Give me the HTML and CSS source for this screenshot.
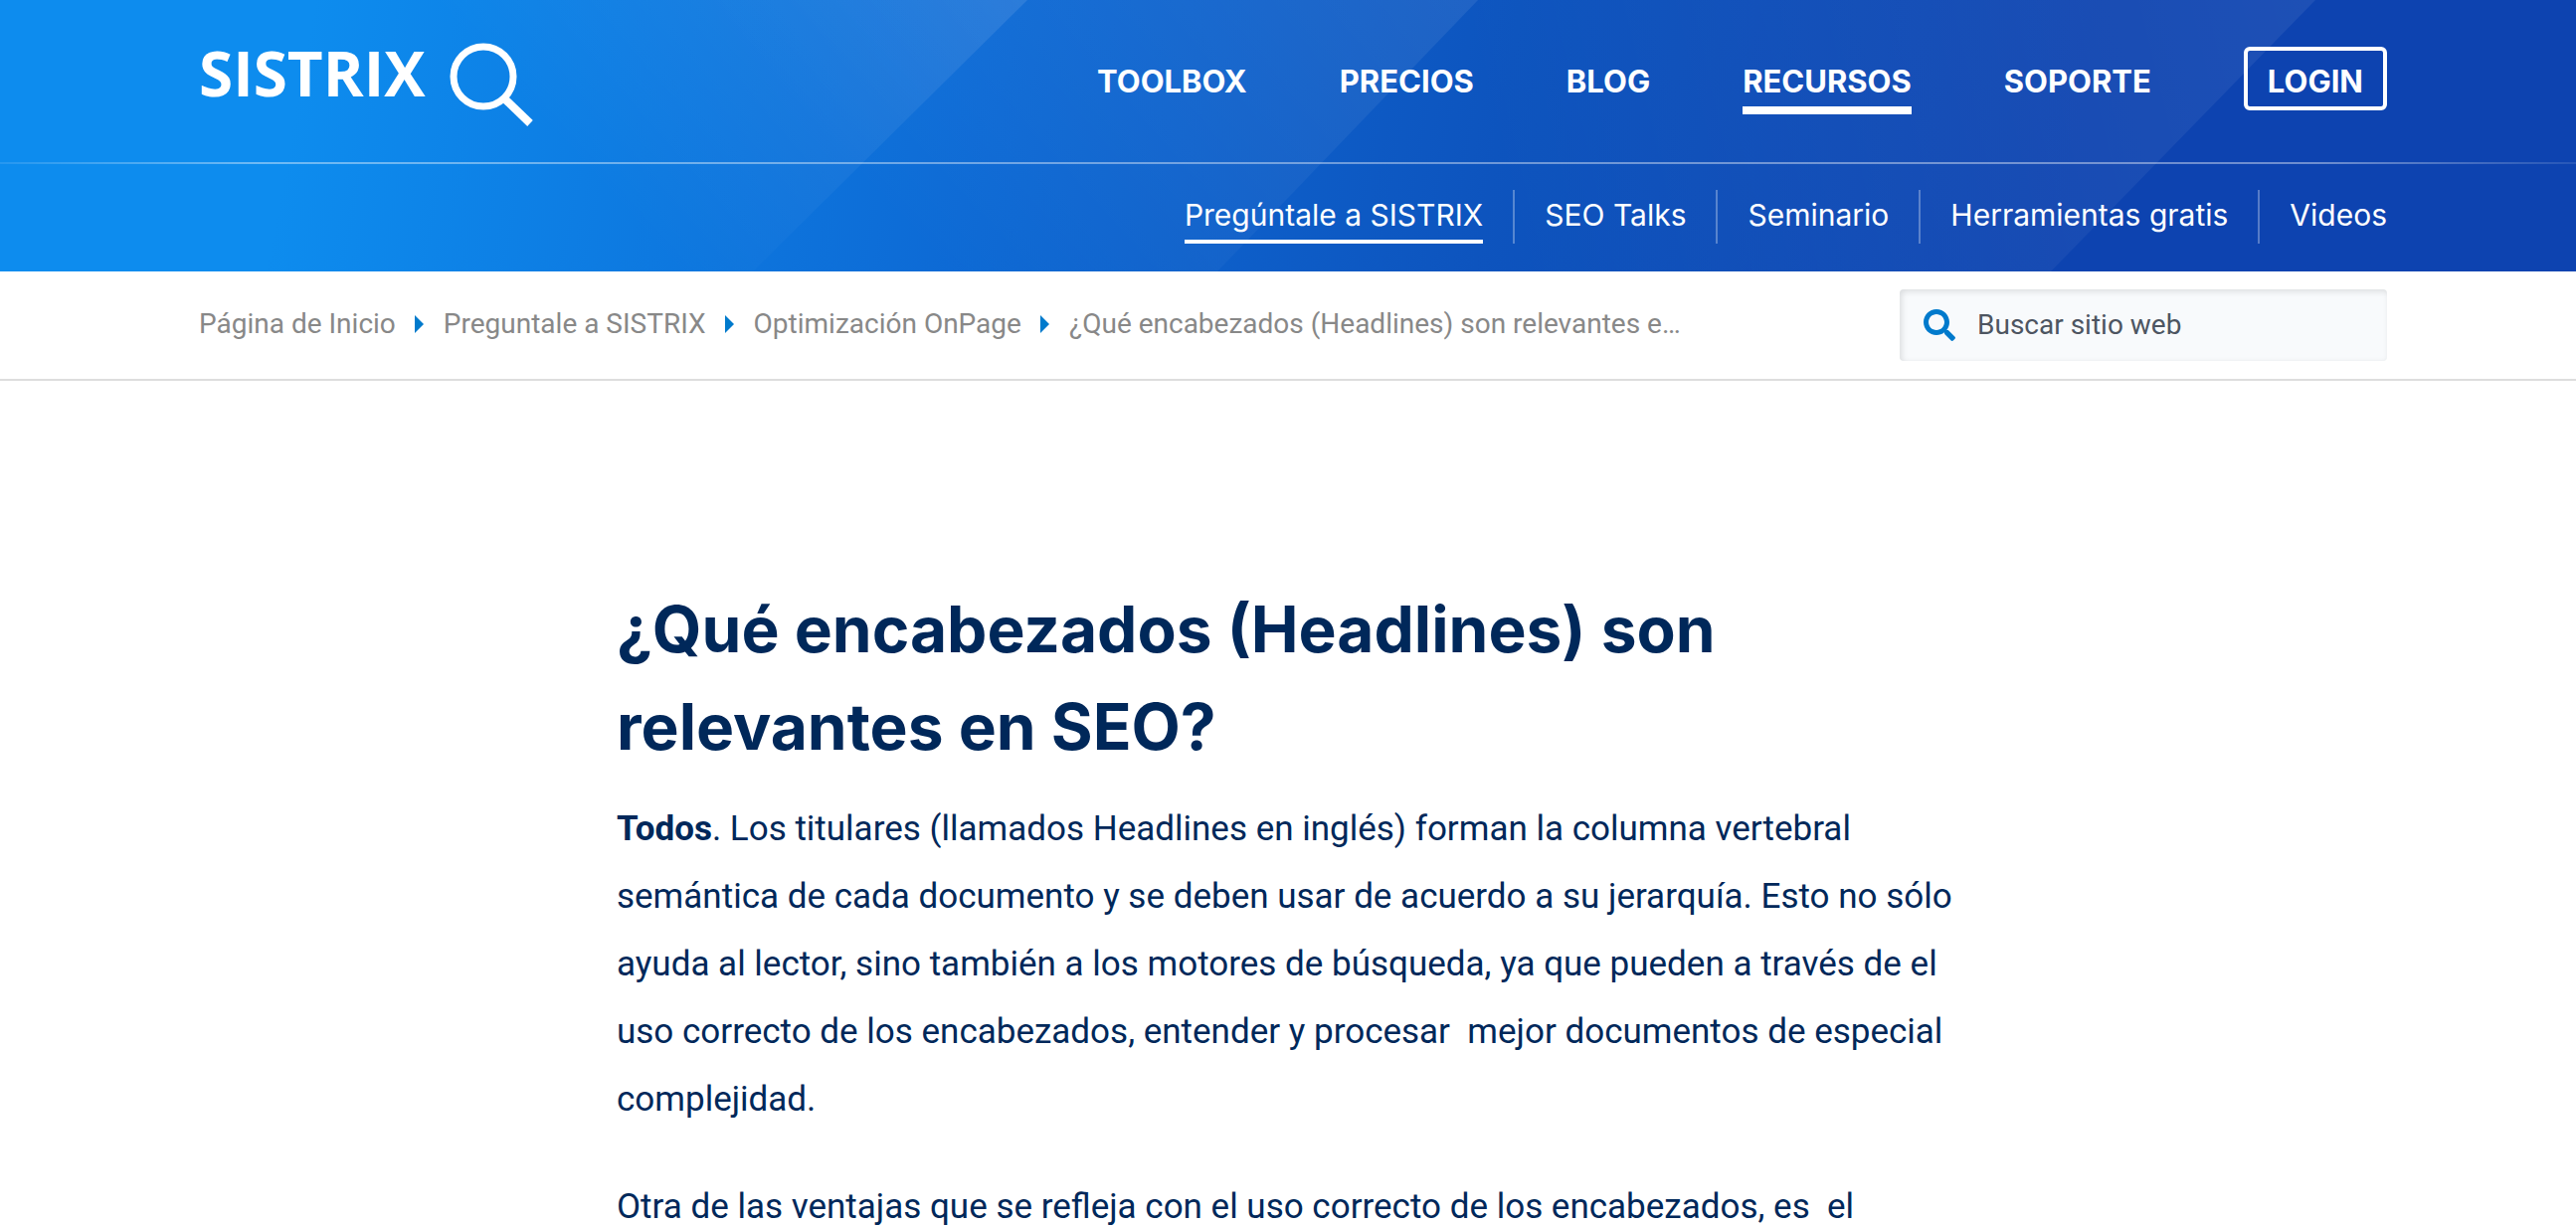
FILE: index.html
```html
<!DOCTYPE html>
<html lang="es">
<head>
<meta charset="utf-8">
<title>¿Qué encabezados (Headlines) son relevantes en SEO? - SISTRIX</title>
<meta name="viewport" content="width=device-width, initial-scale=1">
<link rel="stylesheet" href="styles.css">
</head>
<body>
<header class="site-header">
  <svg class="header-art" viewBox="0 0 2590 273" preserveAspectRatio="none" aria-hidden="true">
    <defs>
      <linearGradient id="beam-a" gradientUnits="userSpaceOnUse" x1="700" y1="300" x2="1033" y2="0">
        <stop offset="0" stop-color="#fff" stop-opacity="0"/>
        <stop offset="1" stop-color="#fff" stop-opacity=".1"/>
      </linearGradient>
      <linearGradient id="beam-b" gradientUnits="userSpaceOnUse" x1="1060" y1="400" x2="1486" y2="0">
        <stop offset="0" stop-color="#fff" stop-opacity="0"/>
        <stop offset="1" stop-color="#fff" stop-opacity=".08"/>
      </linearGradient>
      <linearGradient id="beam-c" gradientUnits="userSpaceOnUse" x1="1500" y1="200" x2="2328" y2="0">
        <stop offset="0" stop-color="#fff" stop-opacity="0"/>
        <stop offset="1" stop-color="#fff" stop-opacity=".07"/>
      </linearGradient>
    </defs>
    <path d="M0 0H1033L757 273H0z" fill="url(#beam-a)"/>
    <path d="M0 0H1486L1224 273H0z" fill="url(#beam-b)"/>
    <path d="M0 0H2328L2062 273H0z" fill="url(#beam-c)"/>
  </svg>
  <div class="wrap header-main">
    <a class="logo" href="#" aria-label="SISTRIX">
      <span class="logo-name">SISTRIX</span>
      <svg class="logo-lens" viewBox="0 0 86 86" aria-hidden="true">
        <circle cx="34" cy="34" r="30" fill="none" stroke="#fff" stroke-width="7"/>
        <path d="M55 56L81 81" stroke="#fff" stroke-width="8"/>
      </svg>
    </a>
    <nav class="main-nav" aria-label="Principal">
      <a href="#">TOOLBOX</a>
      <a href="#">PRECIOS</a>
      <a href="#">BLOG</a>
      <a href="#" class="current">RECURSOS</a>
      <a href="#">SOPORTE</a>
      <a href="#" class="login">LOGIN</a>
    </nav>
  </div>
  <div class="header-line"></div>
  <nav class="wrap sub-nav" aria-label="Recursos">
    <div class="sub-item"><a href="#" class="current">Pregúntale a SISTRIX</a></div>
    <div class="sub-item"><a href="#">SEO Talks</a></div>
    <div class="sub-item"><a href="#">Seminario</a></div>
    <div class="sub-item"><a href="#">Herramientas gratis</a></div>
    <div class="sub-item"><a href="#">Videos</a></div>
  </nav>
</header>
<div class="crumb-bar">
  <div class="wrap crumb-row">
    <nav class="crumbs" aria-label="Ruta">
      <a href="#">Página de Inicio</a>
      <a href="#">Preguntale a SISTRIX</a>
      <a href="#">Optimización OnPage</a>
      <a href="#">¿Qué encabezados (Headlines) son relevantes e…</a>
    </nav>
    <form class="search" role="search">
      <label for="q" aria-label="Buscar">
        <svg class="search-icon" viewBox="0 0 512 512" aria-hidden="true"><path fill="#007acc" d="M505 442.700L405.300 343c-4.500-4.500-10.600-7-17-7H372c27.600-35.300 44-79.700 44-128C416 93.100 322.900 0 208 0S0 93.100 0 208s93.100 208 208 208c48.300 0 92.700-16.400 128-44v16.300c0 6.400 2.500 12.500 7 17l99.700 99.700c9.400 9.400 24.600 9.400 33.900 0l28.300-28.300c9.400-9.400 9.400-24.600.1-34zM208 336c-70.700 0-128-57.200-128-128 0-70.700 57.200-128 128-128 70.700 0 128 57.200 128 128 0 70.700-57.200 128-128 128z"/></svg>
      </label>
      <input id="q" type="search" placeholder="Buscar sitio web">
    </form>
  </div>
</div>
<main class="article">
  <h1>¿Qué encabezados (Headlines) son relevantes en SEO?</h1>
  <p><strong>Todos</strong>. Los titulares (llamados Headlines en inglés) forman la columna vertebral semántica de cada documento y se deben usar de acuerdo a su jerarquía. Esto no sólo ayuda al lector, sino también a los motores de búsqueda, ya que pueden a través de el uso correcto de los encabezados, entender y procesar&nbsp; mejor documentos de especial complejidad.</p>
  <p>Otra de las ventajas que se refleja con el uso correcto de los encabezados, es&nbsp; el</p>
</main>
</body>
</html>
```
FILE: styles.css
```css
* { box-sizing: border-box; }

body {
  margin: 0;
  background: #fff;
  color: #00285a;
  font-family: Roboto, sans-serif;
}

a { color: inherit; text-decoration: none; }

.wrap { padding: 0 190px 0 200px; }

/* Header */
.site-header {
  position: relative;
  color: #fff;
  font-family: Inter, sans-serif;
  background: linear-gradient(100deg, #0d8cee 0%, #0d8cee 12%, #0d6ad5 38%, #0d54be 58%, #0d43b0 80%, #0d43b0 100%);
}

.header-art {
  position: absolute;
  inset: 0;
  width: 100%;
  height: 100%;
}

.header-main, .sub-nav, .header-line { position: relative; }

.header-main {
  display: flex;
  justify-content: space-between;
  align-items: flex-start;
  height: 163px;
}

.logo {
  display: flex;
  align-items: flex-start;
  gap: 24px;
  padding-top: 43px;
}

.logo-name {
  font: 700 62px/60px "Open Sans", sans-serif;
}

.logo-lens { width: 86px; height: 86px; }

.main-nav {
  display: flex;
  align-items: flex-start;
  gap: 93px;
  padding-top: 47px;
  font-size: 31px;
  font-weight: 700;
  line-height: 50px;
}

.main-nav a { padding: 10px 0 0; border-bottom: 8px solid transparent; }
.main-nav .current { border-color: #fff; }

.main-nav .login {
  padding: 6px 20px 0;
  border: 4px solid #fff;
  border-radius: 6px;
}

.header-line {
  height: 2px;
  background: linear-gradient(90deg, rgba(255,255,255,.1), rgba(255,255,255,.4) 10%, rgba(255,255,255,.4) 90%, rgba(255,255,255,.1));
}

.sub-nav {
  display: flex;
  justify-content: flex-end;
  padding-top: 26px;
  padding-bottom: 28px;
  font-size: 30px;
  line-height: 50px;
}

.sub-item { padding: 0 30px; border-right: 2px solid rgba(255,255,255,.3); }
.sub-item:last-child { padding-right: 0; border-right: 0; }
.sub-item a { display: block; border-bottom: 4px solid transparent; }
.sub-item .current { border-color: #fff; }

/* Breadcrumbs and search */
.crumb-bar { border-bottom: 2px solid #ddd; }

.crumb-row {
  display: flex;
  justify-content: space-between;
  align-items: center;
  padding-top: 18px;
  padding-bottom: 18px;
}

.crumbs {
  display: flex;
  align-items: center;
  color: #888;
  font-size: 28px;
  line-height: 34px;
  padding-bottom: 2px;
}

.crumbs a { display: flex; align-items: center; }

.crumbs a + a::before {
  content: "";
  margin: 0 20px 0 19px;
  border-left: 9px solid #007acc;
  border-top: 9px solid transparent;
  border-bottom: 9px solid transparent;
}

.search {
  display: flex;
  align-items: center;
  gap: 22px;
  flex: 0 1 490px;
  height: 72px;
  padding: 0 24px;
  border-radius: 4px;
  background: #f8fafc;
  box-shadow: inset 2px 2px 6px rgba(0,0,0,.12);
}

.search-icon { display: block; width: 32px; height: 32px; }

.search input {
  flex: 1;
  min-width: 0;
  padding: 0;
  border: 0;
  outline: 0;
  background: none;
  font: 28px/34px Roboto, sans-serif;
}

.search input::placeholder { color: #4d5561; opacity: 1; }

/* Article */
.article {
  width: 85%;
  max-width: 1350px;
  margin: 0 auto;
  padding-top: 201px;
}

h1 {
  margin: 0 0 20px;
  font: 700 64px/98px Inter, sans-serif;
}

p {
  margin: 0 0 40px;
  font-size: 35px;
  line-height: 68px;
}

p:last-child { margin-bottom: 0; }
```
